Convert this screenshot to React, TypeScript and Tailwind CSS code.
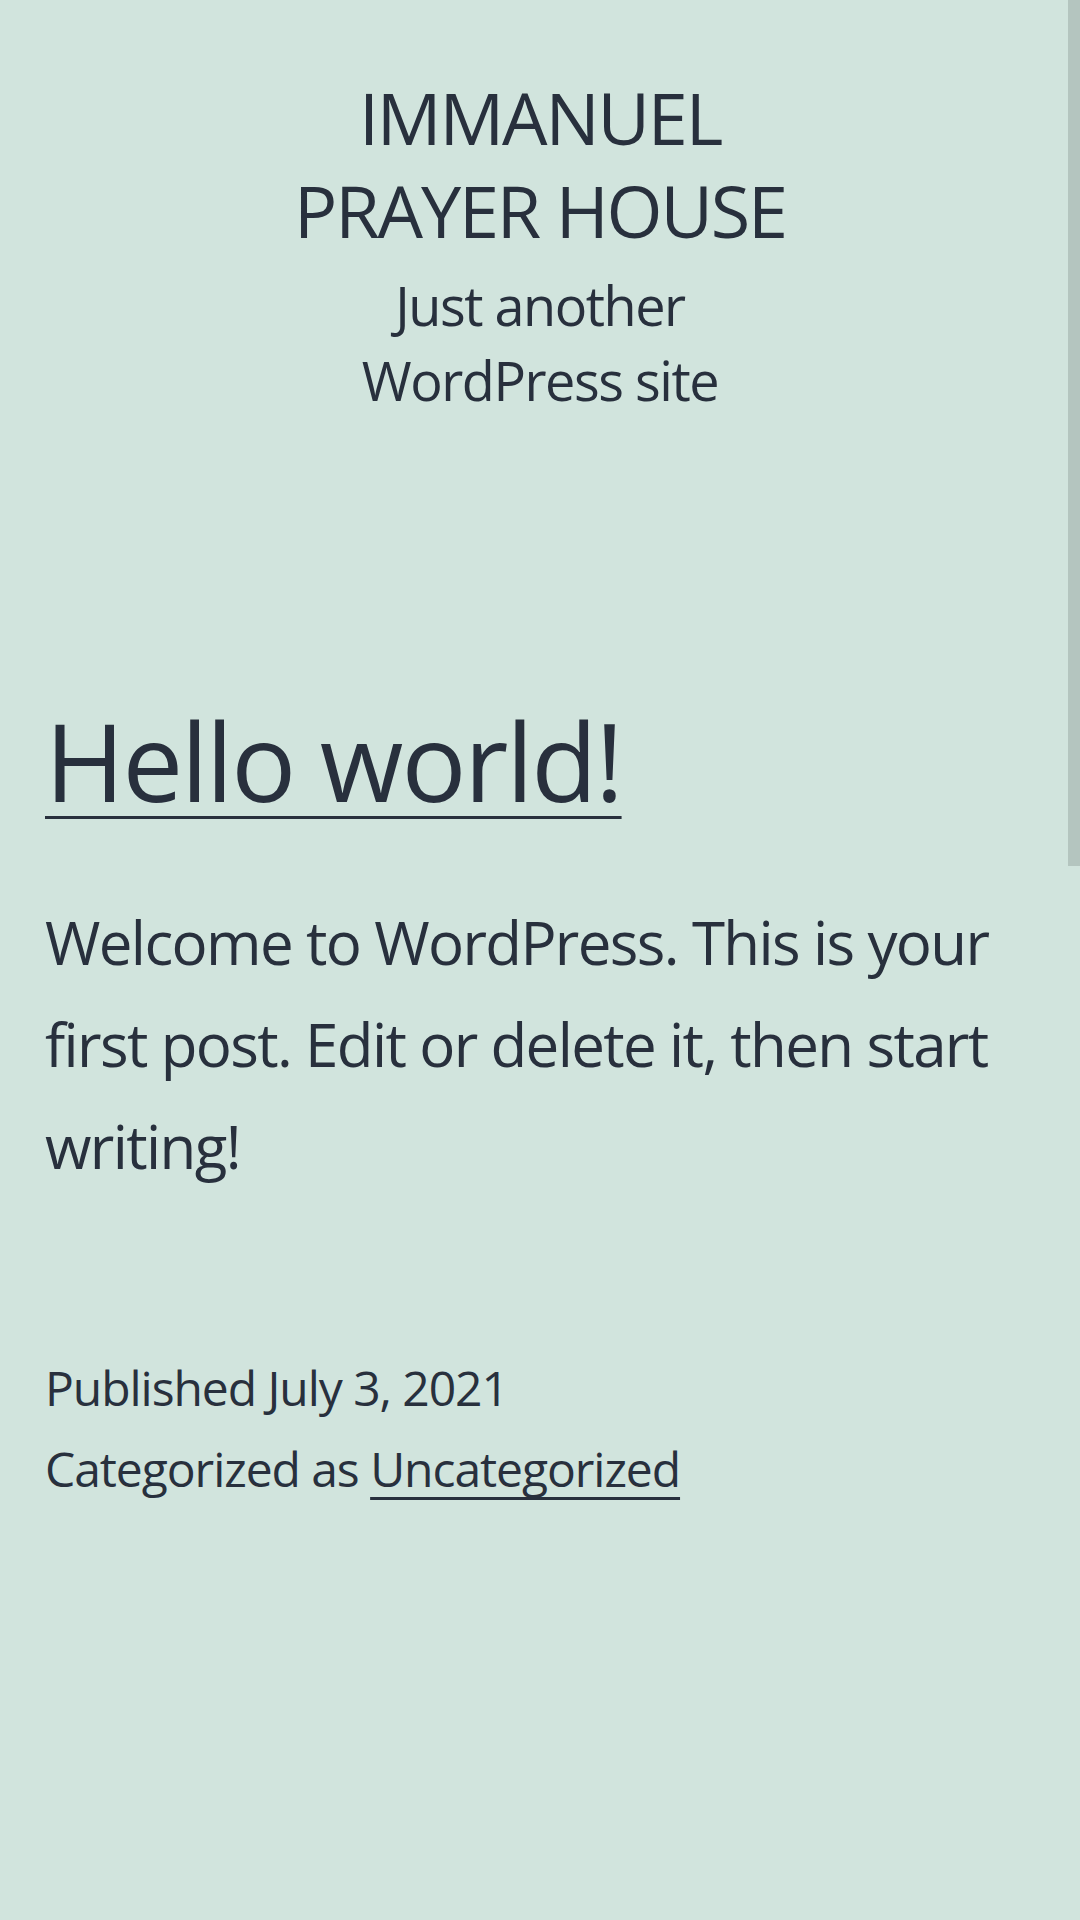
import React from "react";

export default function App() {
  return (
    <div className="relative min-h-[1920px] w-full overflow-hidden bg-[#d1e4dd] text-[#28303d] font-['Open_Sans',_'Noto_Sans',_sans-serif]">
      <header className="flex flex-col items-center px-[45px] pt-[71px] text-center">
        <p className="text-[72px] leading-[93px] tracking-[-0.03em]">
          <span className="block">IMMANUEL</span>
          <span className="block">PRAYER HOUSE</span>
        </p>
        <p className="mt-[11px] text-[54px] leading-[75px] tracking-[-0.027em]">
          <span className="block">Just another</span>
          <span className="block">WordPress site</span>
        </p>
      </header>

      <main className="flex flex-col px-[45px] pt-[273px]">
        <article className="flex flex-col">
          <h2 className="text-[108px] leading-[140px] tracking-[-0.02em]">
            <a className="underline decoration-[3px] underline-offset-[14px]">Hello world!</a>
          </h2>
          <div className="mt-[60px] text-[60px] leading-[102px] tracking-[-0.027em]">
            <span className="block">Welcome to WordPress. This is your</span>
            <span className="block">first post. Edit or delete it, then start</span>
            <span className="block">writing!</span>
          </div>
          <footer className="mt-[150px] flex flex-col text-[48px] leading-[81px] tracking-[-0.022em]">
            <span>Published July 3, 2021</span>
            <span>
              Categorized as{" "}
              <a className="underline decoration-[3px] underline-offset-[10px] [text-decoration-skip-ink:none]">
                Uncategorized
              </a>
            </span>
          </footer>
        </article>
      </main>

      <div className="absolute right-0 top-0 h-[866px] w-[12px] bg-[#b4c5bf]" />
    </div>
  );
}
